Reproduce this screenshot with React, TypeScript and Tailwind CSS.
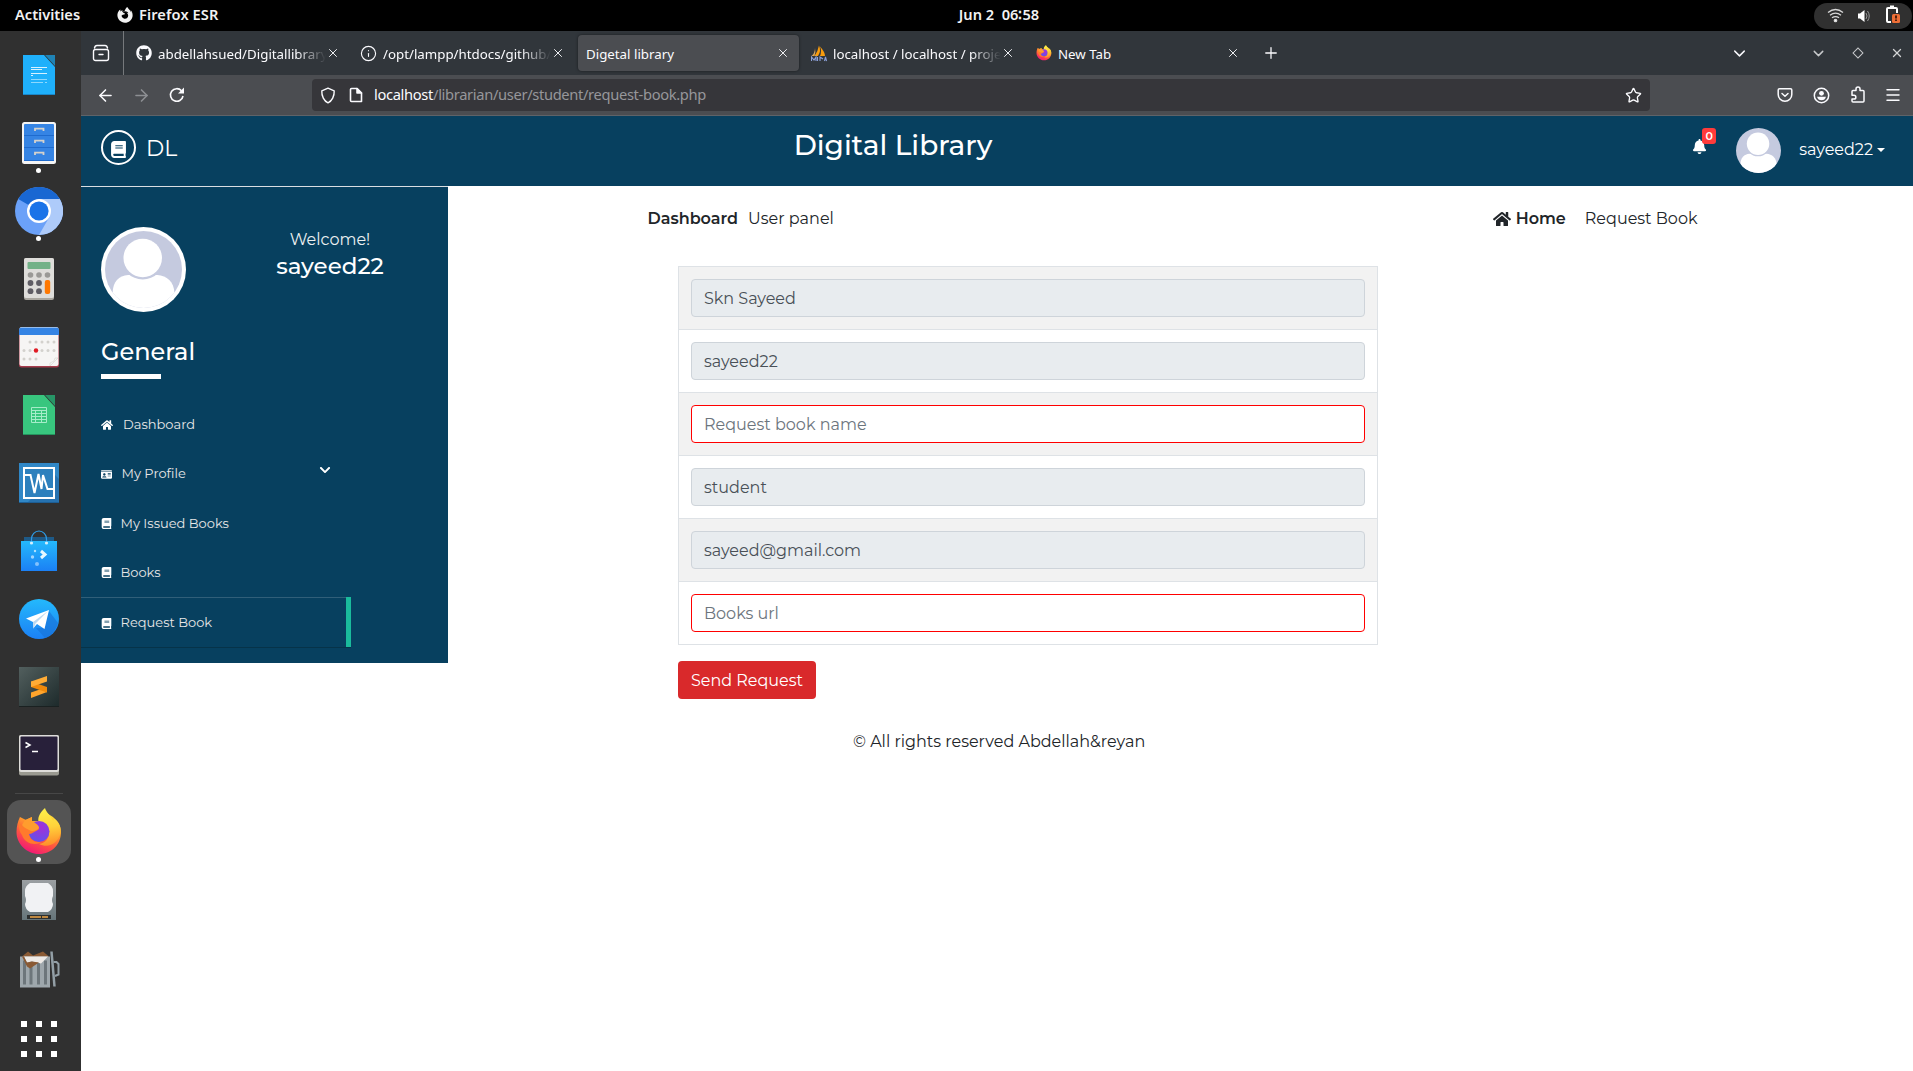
import React from "react";
import { FaHome, FaBook, FaIdCard, FaChevronDown, FaBell, FaGithub, FaFirefoxBrowser } from "react-icons/fa";
import {
  X, Plus, ArrowLeft, ArrowRight, Star, Info, Menu, ChevronDown,
} from "lucide-react";

const avatarBg = "#c5cadf";

function Avatar({ className }: { className: string }) {
  return (
    <svg viewBox="0 0 100 100" className={className}>
      <defs>
        <clipPath id="avatarClip"><circle cx="50" cy="50" r="50" /></clipPath>
      </defs>
      <g clipPath="url(#avatarClip)">
        <rect width="100" height="100" fill={avatarBg} />
        <path d="M10 100V80C10 66 18 58 30 57H68C80 58 90 66 90 80V100Z" fill="#fff" />
        <circle cx="49" cy="35" r="28" fill={avatarBg} />
        <circle cx="49" cy="35" r="25" fill="#fff" />
      </g>
    </svg>
  );
}

function FirefoxLogo({ size }: { size: number }) {
  return (
    <svg width={size} height={size} viewBox="0 0 48 48">
      <defs>
        <linearGradient id="ffBody" x1="0.8" y1="0" x2="0.3" y2="1">
          <stop offset="0" stopColor="#ffe93c" />
          <stop offset="0.35" stopColor="#ffa42a" />
          <stop offset="0.65" stopColor="#ff5540" />
          <stop offset="1" stopColor="#f0147a" />
        </linearGradient>
        <radialGradient id="ffGlobe" cx="0.6" cy="0.3" r="0.8">
          <stop offset="0" stopColor="#a52fd6" />
          <stop offset="1" stopColor="#5b55ee" />
        </radialGradient>
        <linearGradient id="ffTail" x1="0.5" y1="0" x2="0.6" y2="1">
          <stop offset="0" stopColor="#fff04a" />
          <stop offset="0.5" stopColor="#ffd23a" />
          <stop offset="1" stopColor="#ff8a2a" />
        </linearGradient>
      </defs>
      <path d="M5 9C3 13 1.500 18 1.500 24C1.500 36 12 46 24 46C37 46 46 36 46 24C46 17 42 13 38 9L30 4L26 13L17 13V9L11 12Z" fill="url(#ffBody)" />
      <path d="M30 0C24 5 22 11 24 15C31 15 34 20 34 25C34 31 30 35 24 36C34 41 43 35 45.500 25C46.500 18 43 13 39 10.500C39 13 38 13 37 11C35 7 31 4 30 0Z" fill="url(#ffTail)" />
      <circle cx="24" cy="23.500" r="10.500" fill="url(#ffGlobe)" />
      <path d="M5 8C4 12 4 15 7 18C12 16 17 17 23 19C25 20 24 22 21 23C18 24 17 26 14 26C15 32 20 35 27 34C20 38 10 36 7 27C3 22 3 14 5 8Z" fill="#ff7a2c" />
      <path d="M10 12L17 9L16 13C20 14 23 17 24 19C24 21 21 23 16 23C13 21 9 20 7 17Z" fill="#ff9d2e" />
    </svg>
  );
}

/* Dock artwork, one drawing per launcher, in a 48x48 box */
const dockArt: Record<string, React.ReactNode> = {
  writer: (
    <>
      <path d="M8 4H29L40 16V44H8Z" fill="#1fb0fb" />
      <path d="M30 4H40V15Z" fill="#1f83b5" />
      <path d="M8 43H40V44H8Z" fill="#1b87c8" />
      <path d="M16 16.500H32M16 18.500H27M16 22.500H32M16 24.500H18" stroke="#d8f1ff" strokeWidth="1" />
      <path d="M16 28.500H32M16 31.500H28M30 31.500H32" stroke="#8ed8fd" strokeWidth="1" />
    </>
  ),
  files: (
    <>
      <rect x="7" y="3" width="34" height="42" rx="2.500" fill="#f4f4f4" />
      <rect x="9" y="5" width="30" height="37" rx="1" fill="#3584e4" />
      <path d="M9 16.500H39M9 28.500H39M9 41.500H39" stroke="#1f6bce" strokeWidth="1" />
      {[9, 21, 33].map((y) => (
        <path key={y} d={`M20 ${y + 3}V${y + 0.7}H28.500V${y + 3}`} fill="none" stroke="#d5d2cc" strokeWidth="1.800" />
      ))}
    </>
  ),
  chromium: (
    <>
      <circle cx="24" cy="24" r="24" fill="#6ba1f8" />
      <path d="M24 24L3.200 12A24 24 0 0 1 44.800 12Z" fill="#1967d2" />
      <path d="M24 12H44.800A24 24 0 0 1 24 48L34.400 30Z" fill="#aecbfa" />
      <circle cx="24" cy="24" r="12" fill="#fff" />
      <circle cx="24" cy="24" r="9.600" fill="#1a73e8" />
    </>
  ),
  calculator: (
    <>
      <rect x="9" y="3" width="30" height="42" rx="2" fill="#a9a69f" />
      <rect x="9" y="3" width="30" height="40" rx="2" fill="#deddda" />
      <rect x="12.500" y="7" width="23" height="7" rx="1" fill="#73b188" />
      {[15.5, 24, 32.5].map((x) => <circle key={x} cx={x} cy="20" r="2.800" fill="#9a9996" />)}
      {[15.5, 24].map((x) => [28, 36.2].map((y) => <circle key={`${x}${y}`} cx={x} cy={y} r="2.900" fill="#5e5c64" />))}
      <rect x="29.800" y="25" width="5.400" height="14" rx="2" fill="#ff7800" />
    </>
  ),
  calendar: (
    <>
      <rect x="4" y="5" width="40" height="39.500" rx="2.500" fill="#a73c4d" />
      <rect x="4.500" y="4" width="39" height="39" rx="2" fill="#f6f5f4" />
      <path d="M4 11V7A2.500 2.500 0 0 1 6.500 4.500H41.500A2.500 2.500 0 0 1 44 7V12H4Z" fill="#3584e4" />
      {[15, 21, 27, 33, 39].map((x) => <circle key={x} cx={x} cy="19" r="1.500" fill="#d3d1cd" />)}
      {[9, 15, 27, 33, 39].map((x) => <circle key={x} cx={x} cy="27.500" r="1.500" fill="#d3d1cd" />)}
      {[9, 15, 21].map((x) => <circle key={x} cx={x} cy="36" r="1.500" fill="#d3d1cd" />)}
      <circle cx="21" cy="27.500" r="2.200" fill="#e01b24" />
      <path d="M35 43L43 35M35 43V40L39 38L40 35H43" stroke="#d5d3cf" strokeWidth="0.600" fill="none" />
    </>
  ),
  sheets: (
    <>
      <path d="M8 4H29L40 16V44H8Z" fill="#38c67e" />
      <path d="M30 4H40V15Z" fill="#279566" />
      <path d="M8 43H40V44H8Z" fill="#25945e" />
      <path d="M16.500 16.500H31.500V31.500H16.500ZM16.500 19.500H31.500M16.500 22.500H31.500M16.500 25.500H31.500M16.500 28.500H31.500M20.500 19.500V31.500M26.500 19.500V31.500" stroke="#a5ecc9" strokeWidth="1" fill="none" />
    </>
  ),
  monitor: (
    <>
      <rect x="4" y="4" width="40" height="40" fill="#3087c6" />
      <path d="M12 44L40 16L44 20V44Z" fill="#2672b0" />
      <path d="M4 43H44V44H4Z" fill="#1d5e94" />
      <rect x="9" y="9" width="30" height="30" fill="#2d80bd" stroke="#fff" strokeWidth="2" />
      <path d="M10 16H15.500L19.500 34L23.500 15L26.500 30L28 16L32.500 30H38" stroke="#fff" strokeWidth="2" fill="none" />
    </>
  ),
  store: (
    <>
      <path d="M9 10H39V16H9Z" fill="#1e5a87" />
      <path d="M6 14H42V44H6Z" fill="url(#storeGrad)" />
      <path d="M16.500 16V12A7.500 8 0 0 1 31.500 12V16" stroke="#2d9ce8" strokeWidth="1.200" fill="none" />
      <circle cx="16.500" cy="16" r="1.600" fill="#d5effc" /><circle cx="31.500" cy="16" r="1.600" fill="#d5effc" />
      <path d="M26 24L30 27.500L26 31" stroke="#e9f8ff" strokeWidth="3" fill="none" />
      <circle cx="20" cy="24" r="1.200" fill="#b2e2ff" /><circle cx="17.500" cy="30" r="1.700" fill="#a1d7ff" /><circle cx="22" cy="37" r="2" fill="#84c1fd" />
    </>
  ),
  telegram: (
    <>
      <circle cx="24" cy="24" r="20" fill="url(#storeGrad)" />
      <path d="M27 33L34 16L43 28C41 36 35 42 30 43L21 33Z" fill="#1871d6" opacity="0.600" />
      <path d="M11 23.500L34 15L29.500 34L22 29L18.500 33L18 27Z" fill="#fff" />
      <path d="M18 27L33 16L20.500 28.500L18.500 34Z" fill="#bcd8f0" />
    </>
  ),
  sublime: (
    <>
      <rect x="4" y="4" width="40" height="40" fill="url(#subGrad)" />
      <path d="M4 43H44V44H4Z" fill="#1a2121" />
      <path d="M16 29.500L32 24V29L16 35Z" fill="#ffa52c" />
      <path d="M16 18.500L32 24V29.500L16 24Z" fill="#f0890a" />
      <path d="M16 18.500L32 13V18.500L16 24Z" fill="#ffac36" />
    </>
  ),
  terminal: (
    <>
      <rect x="4" y="4" width="40" height="40.500" rx="2" fill="#9a9a91" />
      <rect x="4" y="4" width="40" height="37" rx="2" fill="#deddda" />
      <rect x="5.500" y="5.500" width="37" height="33.500" rx="1" fill="#28203a" />
      <path d="M10.500 11.500L15 14L10.500 16.500M17 20.500H23" stroke="#fff" strokeWidth="1.500" fill="none" />
    </>
  ),
  disk: (
    <>
      <rect x="7" y="4" width="34" height="40" fill="url(#diskGrad)" />
      <path d="M15 7H33Q38 10 38 15V20Q36 24 38 28Q38 33 33 36H15Q10 33 10 28Q12 24 10 20V15Q10 10 15 7Z" fill="#f1f2f4" />
      <rect x="12" y="39" width="24" height="4" fill="#2d3030" />
      <path d="M15 41H26M27 41H33" stroke="#eea545" strokeWidth="1.500" />
    </>
  ),
  trash: (
    <g transform="translate(0 2.500)">
      <path d="M7 10L13 5L18 9L28 5L34 10L24 16L15 20Z" fill="#8a5a34" />
      <path d="M5 10H35V41H5Z" fill="#9ea7ac" />
      {[9.5, 16, 23.5, 30.5].map((x) => <path key={x} d={`M${x} 14V38`} stroke="#6d767b" strokeWidth="3" />)}
      <path d="M9 10H33L26 17L17 15L12 16Z" fill="#eeeae6" />
      <path d="M7 10L12 20L15 22L24 16L17 15L12 16L9 10Z" fill="#8a5a34" />
      <path d="M36.500 5L39.500 40" stroke="#939fa6" strokeWidth="2.500" />
      <path d="M38.500 15.500H41.500L43.500 17.500V28L40 29.500" stroke="#939fa6" strokeWidth="2" fill="none" />
    </g>
  ),
};

function DockItem({ name, running }: { name: string; running?: boolean }) {
  return (
    <div className="relative flex h-[68px] w-[78px] shrink-0 items-center justify-center">
      <svg width="48" height="48" viewBox="0 0 48 48">{dockArt[name]}</svg>
      {running && <span className="absolute bottom-[4px] left-[36px] size-[5px] rounded-full bg-white" />}
    </div>
  );
}

function Dock() {
  return (
    <aside className="flex w-[81px] shrink-0 flex-col bg-[#303030] pt-[10px]">
      <svg className="absolute size-0">
        <defs>
          <linearGradient id="storeGrad" x1="0" y1="0" x2="0" y2="1"><stop stopColor="#24b9fc" /><stop offset="1" stopColor="#1b80f5" /></linearGradient>
          <linearGradient id="subGrad" x1="0" y1="0" x2="1" y2="1"><stop stopColor="#525f5e" /><stop offset="1" stopColor="#1d2a2b" /></linearGradient>
          <linearGradient id="diskGrad" x1="0" y1="0" x2="0" y2="1"><stop stopColor="#9b9fa2" /><stop offset="1" stopColor="#66757a" /></linearGradient>
        </defs>
      </svg>
      <DockItem name="writer" />
      <DockItem name="files" running />
      <DockItem name="chromium" running />
      <DockItem name="calculator" />
      <DockItem name="calendar" />
      <DockItem name="sheets" />
      <DockItem name="monitor" />
      <DockItem name="store" />
      <DockItem name="telegram" />
      <DockItem name="sublime" />
      <DockItem name="terminal" />
      <div className="ml-[15px] mt-[4px] mb-[6px] h-px w-[48px] shrink-0 bg-[#474747]" />
      <div className="relative ml-[7px] flex size-[64px] shrink-0 items-center justify-center rounded-[14px] bg-[#545454]">
        <FirefoxLogo size={48} />
        <span className="absolute bottom-[2px] left-[29px] size-[5px] rounded-full bg-white" />
      </div>
      <div className="h-[2px] shrink-0" />
      <DockItem name="disk" />
      <DockItem name="trash" />
      <div className="ml-[21px] mt-[19px] grid w-[36px] grid-cols-3 gap-[9px]">
        {Array.from({ length: 9 }, (_, i) => <span key={i} className="size-[6px] bg-white" />)}
      </div>
    </aside>
  );
}

function TopBar() {
  return (
    <header className="grid h-[31px] shrink-0 grid-cols-3 items-center bg-black text-[14.600px] font-semibold text-[#f2f2f2]">
      <div className="flex items-center pb-px pl-[15px]">
        <span className="w-[102px]">Activities</span>
        <FaFirefoxBrowser className="mr-[6px] size-[16px]" />
        <span className="tracking-[0.008em]">Firefox ESR</span>
      </div>
      <div className="pb-px pl-[85px] text-center">Jun 2&nbsp; 06∶58</div>
      <div className="mr-[1px] flex h-[26px] w-[98px] items-center justify-self-end rounded-full bg-[#303030] pl-[13px] text-white">
        <svg width="17" height="15" viewBox="0 0 17 15" fill="none" stroke="#d8d8d8" strokeWidth="1.300">
          <path d="M1 4.500Q8.500 -1.500 16 4.500M3 7.200Q8.500 3 14 7.200M5 9.800Q8.500 7.300 12 9.800" />
          <circle cx="8.500" cy="12.500" r="1.200" fill="#fff" />
        </svg>
        <svg className="ml-[13px]" width="14" height="14" viewBox="0 0 14 14">
          <path d="M1 4.500H3L7.500 1V13L3 9.500H1Z" fill="#fff" />
          <path d="M9 4Q11 7 9 10M10.500 2Q14 7 10.500 12" stroke="#999" fill="none" />
        </svg>
        <svg className="-mt-px ml-[14px]" width="15" height="20" viewBox="0 0 15 20">
          <path d="M6 17H3Q2 17 2 16V4Q2 3 3 3H11Q12 3 12 4V8" stroke="#fff" strokeWidth="2" fill="none" />
          <path d="M5 0.500H9V3H5Z" fill="#fff" />
          <rect x="7" y="9" width="8" height="9" rx="1.500" fill="#ee6f37" />
          <path d="M11 10.500V13.500M11 14.500V16" stroke="#3d1808" strokeWidth="1.800" />
        </svg>
      </div>
    </header>
  );
}

function Tab({ icon, title, active, fade }: { icon?: React.ReactNode; title: string; active?: boolean; fade?: boolean }) {
  return (
    <div className={`flex h-[36px] w-[221px] shrink-0 items-center rounded-[4px] pr-[9px] ${active ? "bg-[#4b4d51] pl-[8px] shadow-[0_0_3px_rgba(0,0,0,0.5)]" : "pl-[7px]"}`}>
      {icon && <span className="mr-[6px] flex w-[17px] shrink-0 justify-center">{icon}</span>}
      <span className={`min-w-0 flex-1 overflow-hidden whitespace-nowrap pt-[3px] ${fade ? "[mask-image:linear-gradient(to_left,transparent,black_30px)]" : ""}`}>{title}</span>
      <X size={14} strokeWidth={1.600} className="shrink-0" />
    </div>
  );
}

function TabBar() {
  return (
    <div className="flex h-[44px] shrink-0 items-center bg-[#31363b] text-[13.300px] text-[#fbfbfe]">
      <div className="flex h-full w-[43px] shrink-0 items-center justify-center border-r border-[#76797c] pr-[2px]">
        <svg width="18" height="18" viewBox="0 0 18 18" fill="none" stroke="currentColor" strokeWidth="1.400" strokeLinecap="round">
          <path d="M2.500 4Q3 1.500 5 1.500H13Q15 1.500 15.500 4M7 10.500H11" />
          <rect x="1.500" y="5.500" width="15" height="11" rx="2" />
        </svg>
      </div>
      <div className="flex items-center gap-[4px] pl-[4px]">
        <Tab icon={<FaGithub size={16} />} title="abdellahsued/Digitallibrary" fade />
        <Tab icon={<Info size={17} strokeWidth={1.600} />} title="/opt/lampp/htdocs/github/" fade />
        <Tab title="Digetal library" active />
        <Tab
          icon={
            <svg width="16" height="17" viewBox="0 0 16 17">
              <path d="M8 0.500Q10.500 6 7 11H3.500Q7 6 8 0.500ZM9 1.500Q14 7 14 11H9Q11 6 9 1.500Z" fill="#f89c0e" />
              <path d="M4 3Q4 8 0.500 11H3.500Q5 7 4 3Z" fill="#dba75c" />
              <path d="M0.500 16V12L3 15L5 12V16M6.500 12V16M9 16V12L12 14M13.500 16L14.500 12L15.500 16" stroke="#8ca0d8" strokeWidth="1.100" fill="none" />
            </svg>
          }
          title="localhost / localhost / proje"
          fade
        />
        <Tab icon={<FirefoxLogo size={16} />} title="New Tab" />
      </div>
      <Plus size={18} strokeWidth={1.700} className="ml-[13px]" />
      <div className="ml-auto flex items-center pr-[9px]">
        <ChevronDown size={19} strokeWidth={1.800} className="mr-[61px]" />
        <ChevronDown size={17} strokeWidth={2} className="mr-[27px] text-[#c7c9cb]" />
        <span className="mr-[28px] size-[8px] rotate-45 border-[1.500px] border-[#c7c9cb]" />
        <X size={14} strokeWidth={2.200} className="text-[#d3d4d5]" />
      </div>
    </div>
  );
}

function NavBar() {
  return (
    <div className="flex h-[41px] shrink-0 items-center border-b border-[#5f6368] bg-[#4b4d51] text-[#fbfbfe]">
      <ArrowLeft size={19} strokeWidth={2} className="ml-[15px]" />
      <ArrowRight size={19} strokeWidth={2} className="ml-[17px] text-[#8d8f93]" />
      <svg className="ml-[18px]" width="16" height="16" viewBox="0 0 16 16">
        <path d="M14 9A6.300 6.300 0 1 1 12.500 3.800" stroke="currentColor" strokeWidth="1.600" fill="none" />
        <path d="M15 0.500V6.500H9Z" fill="currentColor" />
      </svg>
      <div className="ml-[127px] flex h-[32px] w-[1338px] items-center rounded-[4px] bg-[#36363a] pl-[8px] pr-[8px] text-[14.700px]">
        <svg width="16" height="17" viewBox="0 0 16 17" fill="none" stroke="currentColor" strokeWidth="1.400">
          <path d="M8 1.200L14.200 3.800C14.500 9 12 14 8 15.800C4 14 1.500 9 1.800 3.800Z" strokeLinejoin="round" />
        </svg>
        <svg className="ml-[12px]" width="16" height="16" viewBox="0 0 16 16" fill="none" stroke="currentColor" strokeWidth="1.600" strokeLinejoin="round">
          <path d="M3.500 1.500H9L13.500 6V14.500H3.500Q2.500 14.500 2.500 13.500V2.500Q2.500 1.500 3.500 1.500Z" />
          <path d="M9 1.500V6H13.500Z" fill="currentColor" />
        </svg>
        <span className="ml-[10px] pb-px tracking-[-0.023em]">localhost<span className="text-[#96969a]">/librarian/user/student/request-book.php</span></span>
        <Star size={17} strokeWidth={1.900} className="ml-auto" />
      </div>
      <div className="ml-auto flex items-center pr-[11px]">
        <svg width="16" height="16" viewBox="0 0 16 16" fill="none" stroke="currentColor" strokeWidth="1.500" strokeLinecap="round" strokeLinejoin="round">
          <path d="M2.500 1.700H13.500Q14.800 1.700 14.800 3V7.500A6.800 6.800 0 0 1 1.200 7.500V3Q1.200 1.700 2.500 1.700Z" />
          <path d="M5 6.500L8 9.300L11 6.500" />
        </svg>
        <svg className="ml-[20px]" width="17" height="17" viewBox="0 0 17 17">
          <circle cx="8.500" cy="8.500" r="7.200" fill="none" stroke="currentColor" strokeWidth="1.500" />
          <circle cx="8.500" cy="6.300" r="2.400" fill="currentColor" />
          <path d="M4 9.700H13Q12 13.300 8.500 13.300T4 9.700Z" fill="currentColor" />
        </svg>
        <svg className="-mt-px ml-[20px]" width="16" height="17" viewBox="0 0 16 17" fill="none" stroke="currentColor" strokeWidth="1.500" strokeLinejoin="round">
          <path d="M2 6.500V5.500Q2 4.500 3 4.500H6V3A2 2 0 0 1 10 3V4.500H13Q14 4.500 14 5.500V15Q14 16 13 16H3Q2 16 2 15V13H4A1.800 1.800 0 0 0 4 9.300H2Z" />
        </svg>
        <Menu size={18} strokeWidth={1.900} className="ml-[18px]" />
      </div>
    </div>
  );
}

function SiteHeader() {
  return (
    <div className="grid h-[70px] shrink-0 grid-cols-3 items-center bg-[#07405f] text-white">
      <div className="flex items-center pl-[20px]">
        <span className="-mt-[7px] flex size-[35px] items-center justify-center rounded-full border-2 border-white"><FaBook size={17} className="mt-[3px]" /></span>
        <span className="-mt-[6px] ml-[10px] text-[22px]">DL</span>
      </div>
      <h1 className="-mt-[12px] pr-[208px] text-center text-[28px] font-medium">Digital Library</h1>
      <div className="-mt-[2px] flex items-center justify-end pr-[28px]">
        <span className="relative mr-[29px]">
          <FaBell size={15} className="-mt-[7px]" />
          <span className="absolute -top-[18px] left-[10px] flex h-[16px] w-[14px] items-center justify-center rounded-[3px] bg-[#ff3b3b] text-[11px] font-semibold">0</span>
        </span>
        <Avatar className="mr-[18px] size-[45px]" />
        <span className="text-[16px]">sayeed22</span>
        <span className="ml-[4px] border-x-[4.500px] border-t-[4.500px] border-x-transparent border-t-white" />
      </div>
    </div>
  );
}

function MenuItem({ icon, label, gap, open, active }: { icon: React.ReactNode; label: string; gap: string; open?: boolean; active?: boolean }) {
  return (
    <li className={`relative flex w-[270px] items-center border-y pl-[20px] text-[13px] ${active ? "h-[51px] border-b-[#063349] border-t-[#305f79] pt-px" : "h-[49.250px] border-transparent pt-[0.500px]"}`}>
      {icon}
      <span className={`${gap} text-[#e7e7e7]`}>{label}</span>
      {open && <FaChevronDown size={12} className="mb-[8px] ml-auto mr-[20px]" />}
      {active && <span className="absolute right-0 top-[-1px] h-[50px] w-[5px] bg-[#1abb9c]" />}
    </li>
  );
}

function Sidebar() {
  return (
    <aside className="flex h-[477px] w-[367px] shrink-0 flex-col border-t border-[#d9dee2] bg-[#07405f] text-white">
      <div className="flex pl-[20px] pt-[40px]">
        <span className="flex size-[85px] items-center justify-center rounded-full bg-white"><Avatar className="size-[77px]" /></span>
        <div className="ml-[57px] w-[174px] pt-px text-center">
          <p className="text-[16px] leading-[24px] text-[#ecf0f1]">Welcome!</p>
          <p className="text-[23px] font-medium leading-[28px]">sayeed22</p>
        </div>
      </div>
      <h2 className="mt-[22px] pl-[20px] text-[24px] font-medium leading-[36px]">General</h2>
      <div className="ml-[20px] mt-[4px] h-[5px] w-[60px] bg-white" />
      <ul className="mt-[21px]">
        <MenuItem icon={<FaHome size={12} />} label="Dashboard" gap="ml-[10px]" />
        <MenuItem icon={<FaIdCard size={11} />} label="My Profile" gap="ml-[9.500px]" open />
        <MenuItem icon={<FaBook size={11} />} label="My Issued Books" gap="ml-[8.500px]" />
        <MenuItem icon={<FaBook size={11} />} label="Books" gap="ml-[8.500px]" />
        <MenuItem icon={<FaBook size={11} />} label="Request Book" gap="ml-[8.500px]" active />
      </ul>
    </aside>
  );
}

const fields = [
  { value: "Skn Sayeed" },
  { value: "sayeed22" },
  { placeholder: "Request book name" },
  { value: "student" },
  { value: "sayeed@gmail.com" },
  { placeholder: "Books url" },
];

function Content() {
  return (
    <main className="flex-1 text-base text-[#212529]">
      <div className="ml-[199.500px] flex h-[64px] w-[1050px] items-center justify-between pt-px">
        <div className="flex gap-[10px]"><b className="font-semibold">Dashboard</b><span>User panel</span></div>
        <div className="flex items-center gap-[19px]">
          <b className="flex items-center gap-[5px] font-semibold"><FaHome size={18} />Home</b>
          <span>Request Book</span>
        </div>
      </div>
      <form className="ml-[230px] mt-[16px] w-[700px]" onSubmit={(e) => e.preventDefault()}>
        <div className="border border-[#dee2e6]">
          {fields.map((f, i) => (
            <div key={i} className={`flex items-center px-[12px] ${i % 2 === 0 ? "bg-[#f2f2f2]" : "bg-white"} ${i > 0 ? "h-[63px] border-t border-[#dee2e6]" : "h-[62px]"}`}>
              <input
                defaultValue={f.value}
                placeholder={f.placeholder}
                readOnly={!f.placeholder}
                className={`h-[38px] w-full rounded-[4px] border px-[12px] outline-none placeholder:text-[#6c757d] ${f.placeholder ? "border-[#f00] bg-white" : "border-[#ced4da] bg-[#e8ecef] text-[#495057]"}`}
              />
            </div>
          ))}
        </div>
        <button className="mt-[16px] h-[38px] w-[138px] rounded-[4px] bg-[#d9292b] pt-px text-white">Send Request</button>
      </form>
      <p className="ml-[405px] mt-[31px] leading-[24px]">© All rights reserved Abdellah&amp;reyan</p>
    </main>
  );
}

export default function App() {
  return (
    <div className="flex h-[1071px] w-[1913px] flex-col overflow-hidden bg-white font-['Noto_Sans',sans-serif]">
      <TopBar />
      <div className="flex min-h-0 flex-1">
        <Dock />
        <div className="flex min-w-0 flex-1 flex-col">
          <TabBar />
          <NavBar />
          <div className="flex flex-1 flex-col font-['Montserrat','Inter',sans-serif]">
            <SiteHeader />
            <div className="flex flex-1 items-start">
              <Sidebar />
              <Content />
            </div>
          </div>
        </div>
      </div>
    </div>
  );
}
